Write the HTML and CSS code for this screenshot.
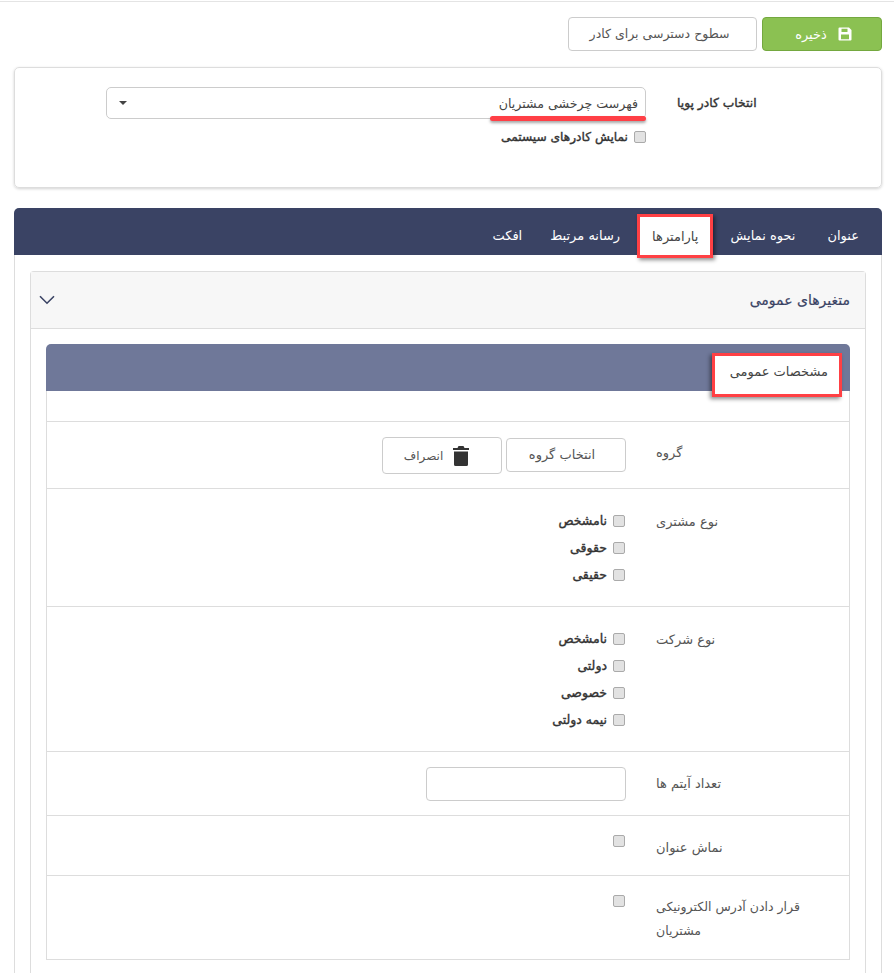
FILE: index.html
```html
<!DOCTYPE html>
<html lang="fa" dir="rtl">
<head>
<meta charset="utf-8">
<title>کادر پویا</title>
<link rel="stylesheet" href="styles.css">
</head>
<body>
<div class="topline"></div>
<main class="page">
  <div class="toolbar">
    <button class="btn btn-save" type="button">
      <svg class="ico-save" viewBox="0 0 14 14" aria-hidden="true"><path fill-rule="evenodd" d="M1.5 0.5H11L13.5 3V12.5Q13.5 13.5 12.5 13.5H1.5Q0.5 13.5 0.5 12.5V1.5Q0.5 0.5 1.5 0.5ZM3.5 1.8V5H9.5V1.8ZM3 7.5V12.2H11V7.5Z"/></svg>
      <span>ذخیره</span>
    </button>
    <button class="btn btn-access" type="button">سطوح دسترسی برای کادر</button>
  </div>

  <section class="card">
    <div class="card-label">انتخاب کادر پویا</div>
    <div class="card-field">
      <div class="select">
        <span>فهرست چرخشی مشتریان</span>
        <i class="caret"></i>
      </div>
      <label class="check check-top"><input type="checkbox"><b>نمایش کادرهای سیستمی</b></label>
      <span class="underline"></span>
    </div>
  </section>

  <nav class="tabs">
    <a class="tab">عنوان</a>
    <a class="tab">نحوه نمایش</a>
    <a class="tab tab-on">پارامترها</a>
    <a class="tab">رسانه مرتبط</a>
    <a class="tab tab-end">افکت</a>
  </nav>

  <section class="panel">
    <div class="accordion">
      <header class="acc-head">
        <h2>متغیرهای عمومی</h2>
        <svg class="chev" viewBox="0 0 16 10" aria-hidden="true"><path d="M1 1.2L8 8.2L15 1.2"/></svg>
      </header>
      <div class="acc-body">
        <div class="subtabs"><a class="subtab">مشخصات عمومی</a></div>
        <div class="table">
          <div class="row"></div>
          <div class="row row-group">
            <div class="lab">گروه</div>
            <div class="field btns">
              <button class="btn btn-pick" type="button">انتخاب گروه</button>
              <button class="btn btn-cancel" type="button">
                <svg class="ico-trash" viewBox="0 0 16 20" aria-hidden="true"><path d="M5.5 0H10.5L11.5 2H16V4H0V2H4.5ZM1 5.5H15V18.5Q15 20 13.5 20H2.5Q1 20 1 18.5Z"/></svg>
                <span>انصراف</span>
              </button>
            </div>
          </div>
          <div class="row row-list">
            <div class="lab">نوع مشتری</div>
            <div class="field list">
              <label class="check"><input type="checkbox"><b>نامشخص</b></label>
              <label class="check"><input type="checkbox"><b>حقوقی</b></label>
              <label class="check"><input type="checkbox"><b>حقیقی</b></label>
            </div>
          </div>
          <div class="row row-list">
            <div class="lab">نوع شرکت</div>
            <div class="field list">
              <label class="check"><input type="checkbox"><b>نامشخص</b></label>
              <label class="check"><input type="checkbox"><b>دولتی</b></label>
              <label class="check"><input type="checkbox"><b>خصوصی</b></label>
              <label class="check"><input type="checkbox"><b>نیمه دولتی</b></label>
            </div>
          </div>
          <div class="row row-input">
            <div class="lab">تعداد آیتم ها</div>
            <div class="field"><input class="text" type="text"></div>
          </div>
          <div class="row row-flag">
            <div class="lab">نماش عنوان</div>
            <div class="field"><input class="box" type="checkbox"></div>
          </div>
          <div class="row row-flag row-last">
            <div class="lab lab-wrap">قرار دادن آدرس الکترونیکی مشتریان</div>
            <div class="field"><input class="box" type="checkbox"></div>
          </div>
        </div>
      </div>
    </div>
  </section>
</main>
</body>
</html>
```
FILE: styles.css
```css
* { box-sizing: border-box; }
html, body { margin: 0; background: #fff; }
body { font-family: "DejaVu Sans", "Noto Sans", sans-serif; font-size: 13px; color: #555; }
.topline { margin-top: 1px; height: 1px; background: #e4e4e4; }
.page { padding: 15px 12px 0 14px; }

.toolbar { display: flex; gap: 5px; }
.btn { height: 34px; font: inherit; border: 1px solid #ccc; border-radius: 4px; background: #fff; color: #555; display: inline-flex; align-items: center; justify-content: center; padding: 0; }
.btn-save { width: 120px; background: #8bc152; border-color: #74a83f; color: #fff; gap: 11px; padding-left: 3px; }
.ico-save { width: 14px; height: 14px; fill: #fff; }
.btn-access { width: 189px; font-size: 12.5px; padding-right: 6px; padding-bottom: 2px; }

.card { margin-top: 16px; height: 121px; border: 1px solid #ddd; border-radius: 5px; box-shadow: 0 1px 3px rgba(0,0,0,.18); display: grid; grid-template-columns: 235px 540px; padding-top: 19px; }
.card-label { text-align: left; padding: 9px 0 0 31px; color: #333; font-size: 12.3px; -webkit-text-stroke: .4px #333; }
.card-field { position: relative; }
.select { height: 32px; border: 1px solid #ccc; border-radius: 5px; display: flex; align-items: center; justify-content: space-between; padding: 0 7px 0 12px; color: #444; font-size: 12.6px; }
.caret { width: 0; height: 0; border: 4px solid transparent; border-top: 4px solid #444; border-bottom: 0; }
.underline { position: absolute; top: 29px; right: 0; width: 156px; height: 5px; background: #ff3f46; border-radius: 3px; box-shadow: 0 2px 3px rgba(0,0,0,.35); }
.check { display: flex; align-items: center; gap: 6px; height: 27px; color: #333; }
.check b { font-weight: normal; font-size: 12.5px; -webkit-text-stroke: .4px #333; }
.check-top { height: 18px; margin-top: 9px; }
.check-top b { font-size: 12.2px; }
.check input, .box { appearance: none; -webkit-appearance: none; margin: 0 1px 0 0; width: 12px; height: 12px; flex: none; border: 1px solid #aaa; border-radius: 2px; background: #e2e2e2; }
.check-top input { margin-right: 0; }

.tabs { margin-top: 20px; height: 47px; background: #3a4364; border-radius: 5px 5px 0 0; display: flex; padding-right: 7px; }
.tab { color: #fff; line-height: 55px; padding: 0 16px; }
.tab-end { margin-right: -4px; }
.tab-on { margin: 6px 1px 0; height: 44px; line-height: 39px; background: #fff; color: #444; border: 3px solid #ff4044; padding: 0 12px; box-shadow: 2px 2px 4px rgba(0,0,0,.45); position: relative; }

.panel { border: solid #ddd; border-width: 0 1px; padding: 16px 15px 0; }
.accordion { border: 1px solid #ddd; border-bottom: 0; border-radius: 4px 4px 0 0; }
.acc-head { height: 57px; background: #f7f7f7; border-bottom: 1px solid #ddd; display: flex; align-items: center; justify-content: space-between; padding: 0 15px 0 8px; }
.acc-head h2 { margin: 0; font-size: 14px; font-weight: normal; color: #3a4364; -webkit-text-stroke: .2px #3a4364; }
.chev { width: 16px; height: 10px; fill: none; stroke: #3a4364; stroke-width: 1.6; }
.acc-body { padding: 15px 15px 13px; }
.subtabs { height: 47px; background: #6f7899; border-radius: 5px 5px 0 0; display: flex; padding-right: 8px; }
.subtab { margin-top: 9px; height: 44px; line-height: 31px; padding: 0 11px 0 15px; background: #fff; color: #444; border: 3px solid #ff4044; box-shadow: -2px 2px 4px rgba(0,0,0,.45); position: relative; }

.table { border: solid #ddd; border-width: 0 1px 1px; display: grid; grid-template-rows: 31px 67px 118px 145px 64px 60px 83px; height: 569px; }
.row { display: grid; grid-template-columns: 223px 1fr; border-bottom: 1px solid #ddd; align-items: start; }
.row-last { border-bottom: 0; }
.lab { text-align: left; padding-left: 30px; }
.row-group { padding-top: 16px; }
.row-group .lab { padding-top: 7px; }
.btns { display: flex; gap: 4px; align-items: flex-start; }
.btn-pick { width: 120px; padding-bottom: 2px; padding-right: 8px; }
.btn-cancel { width: 120px; height: 37px; margin-top: -1px; gap: 10px; padding-right: 11px; font-size: 12px; }
.ico-trash { width: 16px; height: 20px; fill: #333; }
.row-list { padding-top: 18px; }
.row-list .lab { padding-top: 7px; }
.row-input { padding-top: 15px; }
.row-input .lab { padding-top: 9px; }
.text { width: 200px; height: 34px; border: 1px solid #ccc; border-radius: 4px; display: block; }
.row-flag { padding-top: 19px; }
.row-flag .box { display: block; }
.row-flag .lab { padding-top: 5px; }
.row-flag.row-last { padding-top: 19px; }
.row-flag .lab-wrap { line-height: 24px; padding-right: 20px; padding-top: 0; font-size: 12.5px; }
```
